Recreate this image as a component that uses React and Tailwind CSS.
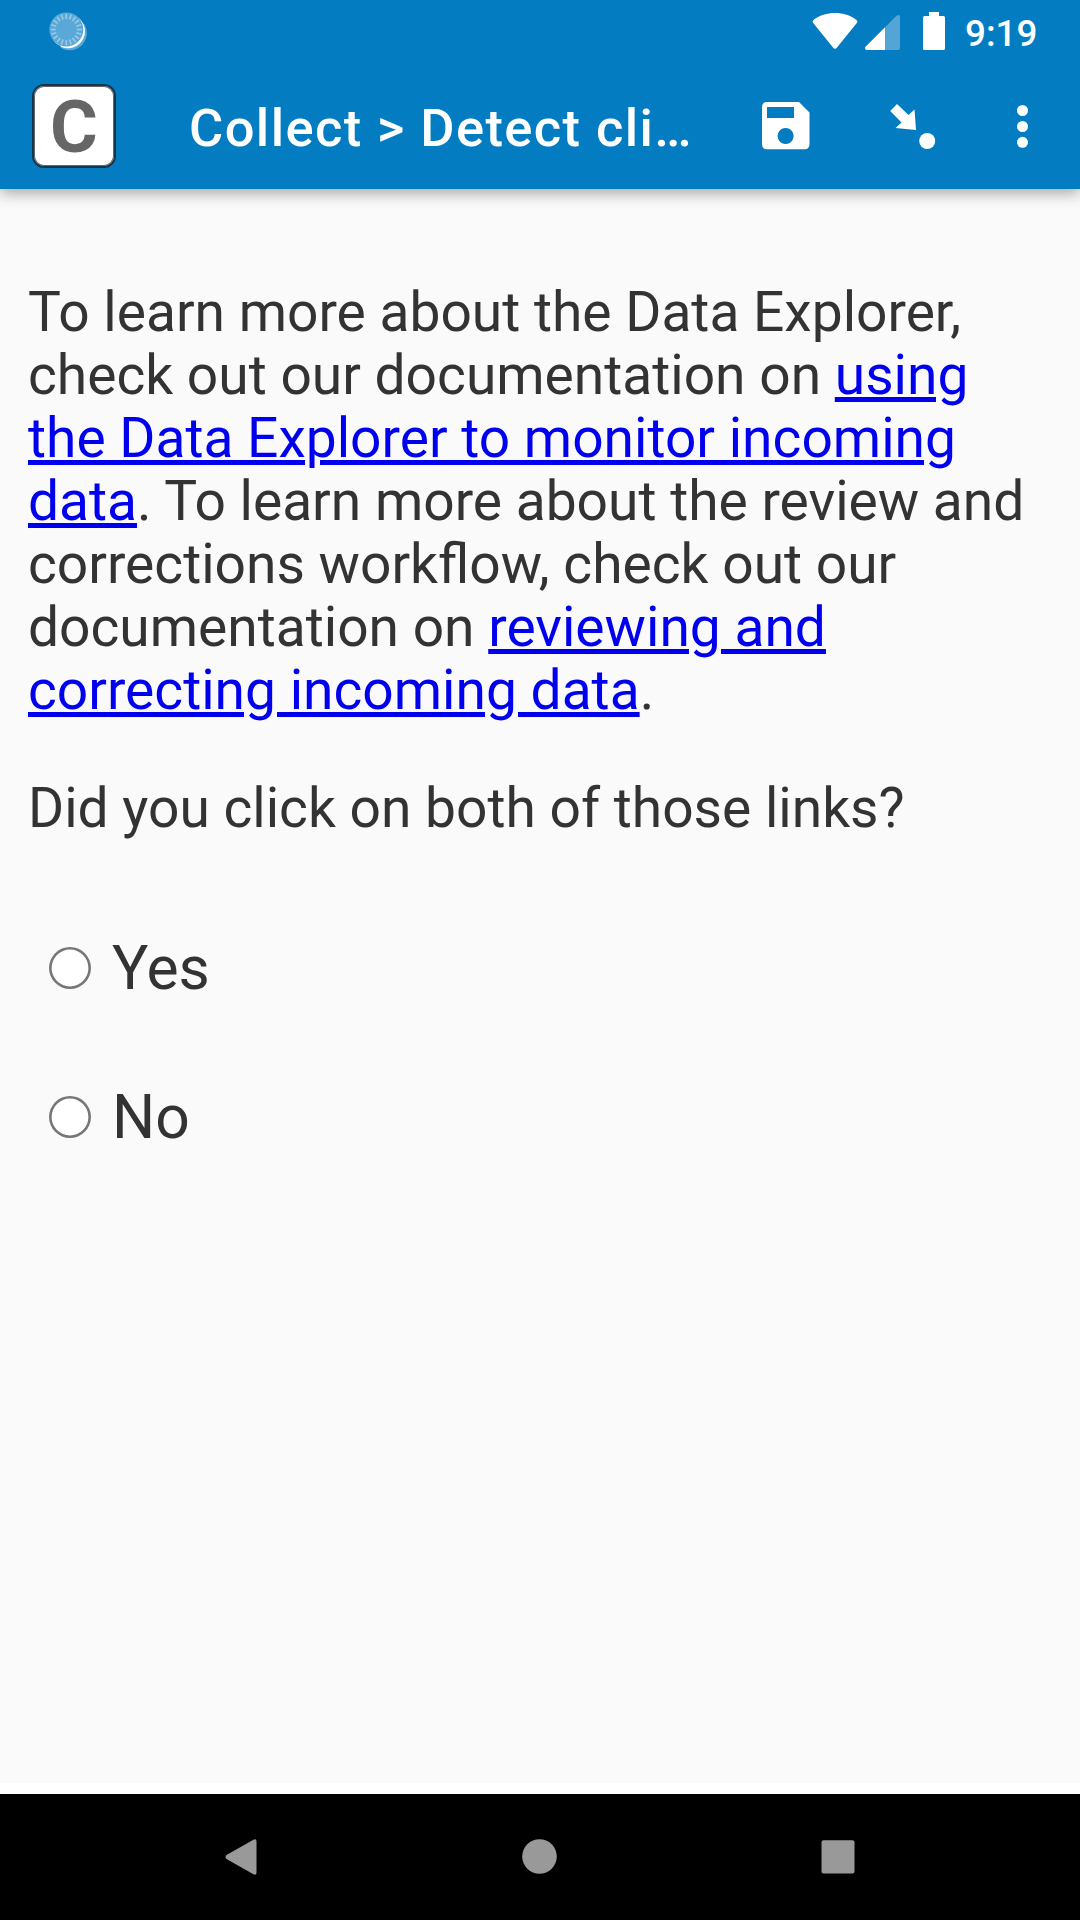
const TICKS = Array.from({ length: 20 }, (_, i) => i * 18);

function SyncIcon() {
  return (
    <svg className="ml-[49px] mt-[12px] h-[39px] w-[39px]" viewBox="0 0 39 39" aria-hidden="true">
      <circle cx="20.7" cy="21" r="17.2" fill="#59a8d7" />
      <circle cx="19" cy="19.200" r="17" fill="#fff" />
      <path d="M17.300 0.500A17 17 0 0 1 34.300 12L36 9L30 2H17Z" fill="#037cc1" />
      <path d="M0.300 17.500A17 17 0 0 0 12 34L10 37L2 30V17Z" fill="#037cc1" />
      <circle cx="17.3" cy="17.5" r="17" fill="#59a8d7" />
      {TICKS.map((angle) => (
        <path key={angle} d="M17.3 1.8V7" stroke="#9acae6" strokeWidth="1.6" transform={`rotate(${angle} 17.3 17.5)`} />
      ))}
    </svg>
  );
}

function StatusBar() {
  return (
    <div className="flex h-[63px] items-start justify-between">
      <SyncIcon />
      <div className="flex items-start">
        <svg className="mr-[10px] h-[63px] w-[145px]" viewBox="0 0 145 63" fill="#fff" aria-hidden="true">
          <path d="M3.200 20.200C15 10.500 35 10.500 46.800 20.200Q48 21.500 47 22.800L27 47.500Q25 50 23 47.500L3 22.800Q2 21.500 3.200 20.200Z" />
          <path d="M75 27.300L86.500 15.800Q90 13.500 90 17V48Q90 50 88 50H75Z" fill="#53a5d5" />
          <path d="M55.500 46.800L75 27.300V50H57Q55 50 55 48Z" />
          <path d="M119 12H129V16H133.500Q135 16 135 17.500V48.500Q135 50 133.500 50H114.500Q113 50 113 48.500V17.500Q113 16 114.500 16H119Z" />
        </svg>
        <time className="mr-[42px] mt-[12px] w-[73px] whitespace-nowrap text-[36.75px] font-medium leading-[44px]">9:19</time>
      </div>
    </div>
  );
}

function Toolbar() {
  return (
    <div className="flex h-[126px] items-center">
      <div className="ml-8 flex h-21 w-21 shrink-0 items-center justify-center rounded-[12px] border-[2px] border-[#14364d] bg-white pt-[3px] text-[73px] font-bold leading-none text-[#666] shadow-[inset_0_0_0_1px_#666]">
        C
      </div>
      <h1 className="ml-[73px] w-[510px] shrink-0 whitespace-nowrap pt-[4px] text-[52.5px] font-medium leading-[62px] tracking-[1.4px]">Collect &gt; Detect cli…</h1>
      <svg className="ml-[51px] h-[63px] w-[330px] shrink-0" viewBox="750 95 330 63" fill="#fff" aria-hidden="true">
        <path fillRule="evenodd" d="M767 102H799L809.500 112.500V144Q809.500 149.300 804.500 149.300H767Q762 149.300 762 144.500V107Q762 102 767 102ZM767 107V118H794V107ZM785.600 128A8 8 0 1 0 785.610 128Z" />
        <path d="M897 104L908.500 115L914.500 109.500L916 130L895.500 128L901.500 122.500L890.200 111Z" />
        <circle cx="927.200" cy="141" r="8" />
        <circle cx="1022.500" cy="110.500" r="5.500" />
        <circle cx="1022.500" cy="126.500" r="5.500" />
        <circle cx="1022.500" cy="142.300" r="5.500" />
      </svg>
    </div>
  );
}

function DocLink({ children }) {
  return (
    <a href="#" className="text-[#0000ee] underline decoration-[5px] underline-offset-[3px]">
      {children}
    </a>
  );
}

function Choice({ label }) {
  return (
    <label className="flex h-[149px] items-start">
      <input type="radio" name="clicked" className="mt-[53px] h-[42px] w-[42px] shrink-0 appearance-none rounded-full bg-white shadow-[inset_0_0_0_2.6px_#767676]" />
      <span className="ml-[21px] mt-[39px] text-[60.6px] leading-[71px]">{label}</span>
    </label>
  );
}

function NavBar() {
  return (
    <nav className="flex h-[126px] justify-center bg-black">
      <svg className="h-[126px] w-[1080px]" viewBox="0 1794 1080 126" fill="#999" aria-hidden="true">
        <path d="M226.500 1855L253 1840Q256.500 1838 256.500 1841.500V1872.500Q256.500 1876 253 1874L226.500 1859Q224.500 1857 226.500 1855Z" />
        <circle cx="539.500" cy="1856.500" r="17.300" />
        <rect x="821.500" y="1840.300" width="33" height="33.300" rx="2" />
      </svg>
    </nav>
  );
}

export default function App() {
  return (
    <div className="flex h-[1920px] w-[1080px] flex-col overflow-hidden bg-white font-['Roboto',sans-serif]">
      <header className="z-10 h-[189px] shrink-0 bg-[#037cc1] text-white shadow-[0_4px_14px_rgba(0,0,0,0.35)]">
        <StatusBar />
        <Toolbar />
      </header>
      <main className="h-[1594px] bg-[#fafafa] px-7 pt-[92px] text-[55.125px] leading-[63px] text-[#333]">
        <p>
          To learn more about the Data Explorer,<br />
          check out our documentation on <DocLink>using<br />the Data Explorer to monitor incoming<br />data</DocLink>. To learn more about the review and<br />
          corrections workflow, check out our<br />
          documentation on <DocLink>reviewing and<br />correcting incoming data</DocLink>.
        </p>
        <p className="mt-[55px]">Did you click on both of those links?</p>
        <div className="ml-[21px] mt-[54px]">
          <Choice label="Yes" />
          <Choice label="No" />
        </div>
      </main>
      <div className="mt-[11px]">
        <NavBar />
      </div>
    </div>
  );
}
